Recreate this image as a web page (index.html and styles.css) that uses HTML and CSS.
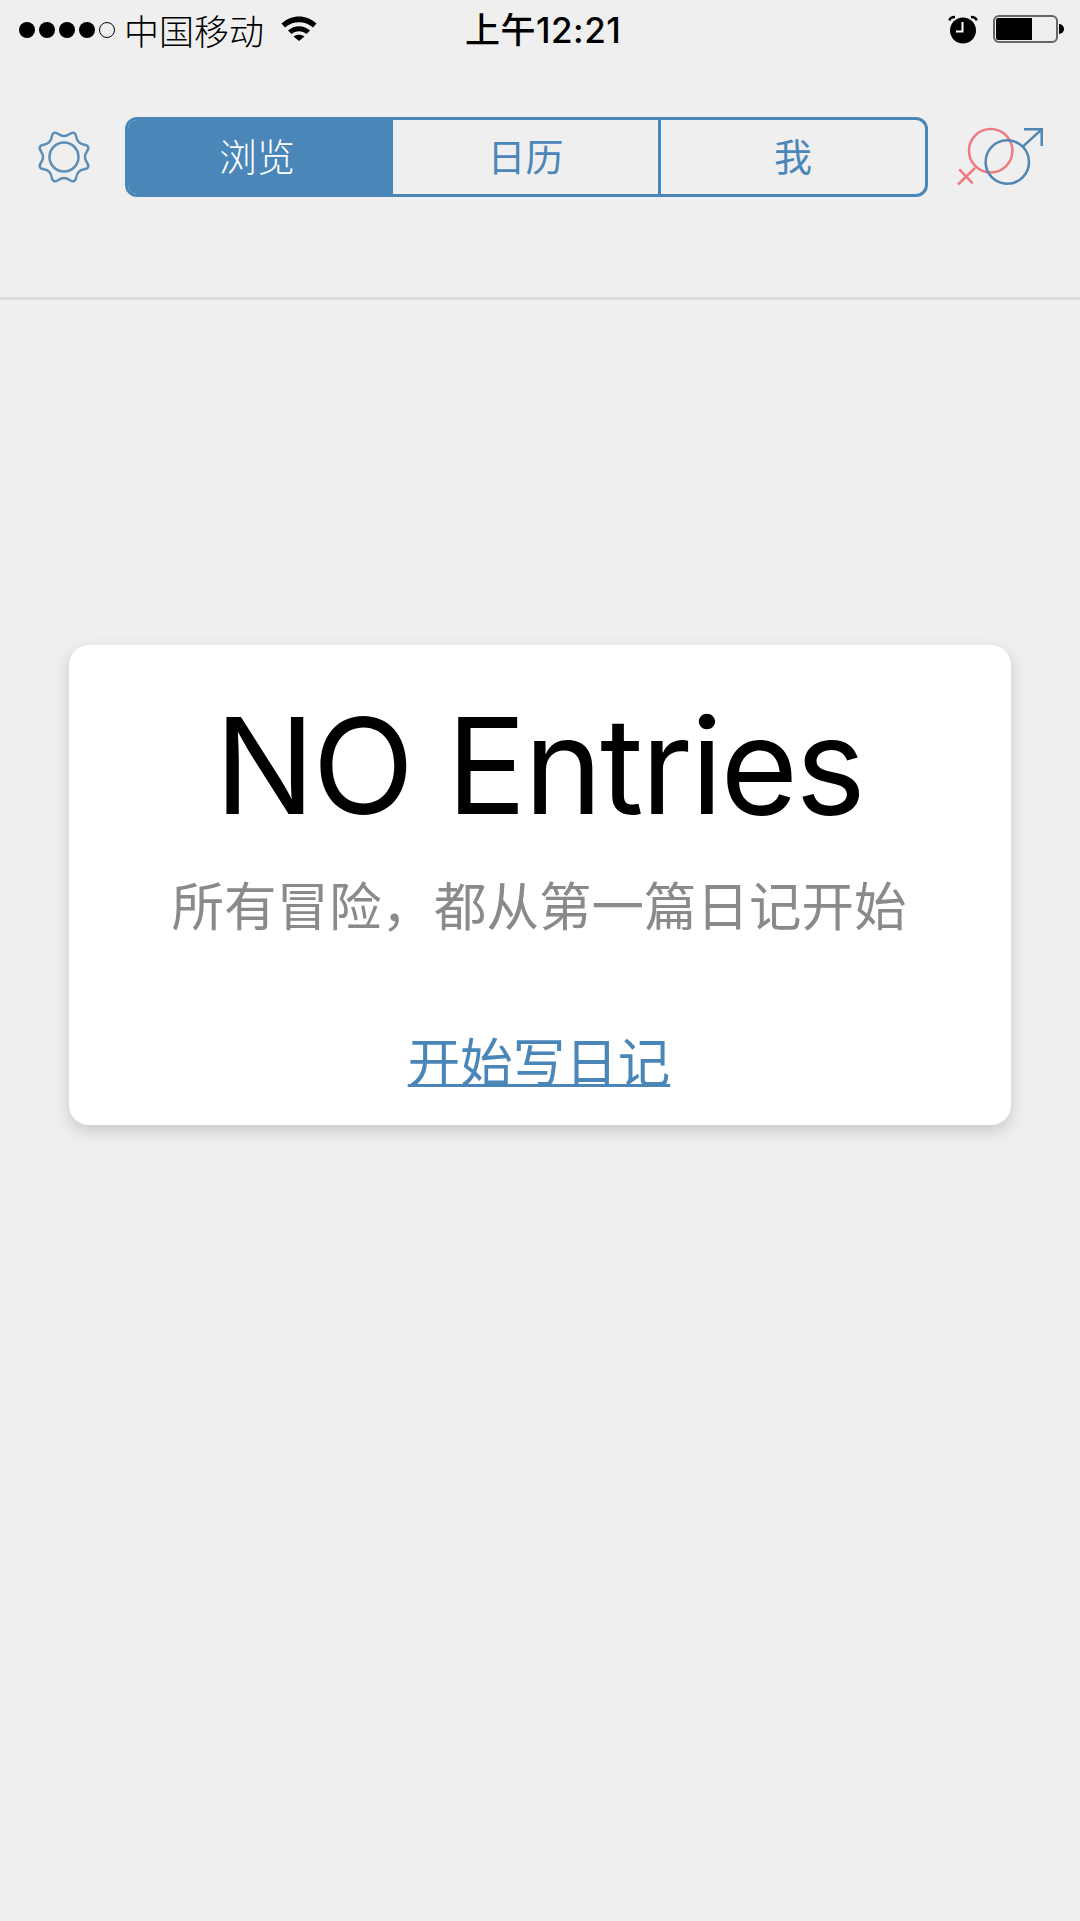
FILE: index.html

```html
<!DOCTYPE html>
<html>
<head>
    <meta charset="UTF-8">
    <title>日记</title>
    <link rel="stylesheet" href="styles.css">
</head>
<body>
    <div class="status">
        <div class="status-left">
            <div class="signal">
                <i class="dot"></i><i class="dot"></i><i class="dot"></i><i class="dot"></i><i class="dot empty"></i>
            </div>
            <span class="carrier">中国移动</span>
            <svg class="wifi" width="36" height="26" viewBox="0 0 36 26">
                <path d="M0.500 8.500C10.500 -1 25.500 -1 35.500 8.500L32 12.500C24 5.500 12 5.500 4 12.500Z"/>
                <path d="M7 15.500C13.500 9.800 22.500 9.800 29 15.500L25.500 19C20.800 15.200 15.200 15.200 10.500 19Z"/>
                <path d="M12.500 21.500C15.500 19.200 20.500 19.200 23.500 21.500L18 26Z"/>
            </svg>
        </div>
        <div class="clock">上午12:21</div>
        <div class="status-right">
            <svg class="alarm" width="30" height="30" viewBox="0 0 30 30">
                <circle cx="15" cy="15.500" r="13"/>
                <path d="M1.500 5.500Q2 2 7 2" class="alarm-ear"/>
                <path d="M28.500 5.500Q28 2 23 2" class="alarm-ear"/>
                <path d="M14.500 7V16.500H8" class="alarm-hand"/>
            </svg>
            <div class="battery"><div class="battery-level"></div></div>
            <div class="battery-tip"></div>
        </div>
    </div>

    <div class="header">
        <svg class="gear" width="56" height="56" viewBox="0 0 56 56">
            <path d="M50.900 22.450Q47 28 50.900 33.550Q54.800 39.100 48.115 40.265Q41.430 41.430 40.265 48.115Q39.100 54.800 33.550 50.900Q28 47 22.450 50.900Q16.900 54.800 15.735 48.115Q14.570 41.430 7.885 40.265Q1.200 39.100 5.100 33.550Q9 28 5.100 22.450Q1.200 16.900 7.885 15.735Q14.570 14.570 15.735 7.885Q16.900 1.200 22.450 5.100Q28 9 33.550 5.100Q39.100 1.200 40.265 7.885Q41.430 14.570 48.115 15.735Q54.800 16.900 50.900 22.450Z"/>
            <circle cx="28" cy="28" r="14.500"/>
        </svg>
        <div class="tabs">
            <div class="tab active">浏览</div>
            <div class="tab tab-split">日历</div>
            <div class="tab">我</div>
        </div>
        <svg class="gender" width="90" height="66" viewBox="0 0 90 66">
            <g class="female">
                <circle cx="33.700" cy="26.700" r="21.700"/>
                <path d="M18 44L1 60.500M2.300 45.300L15.700 59.300"/>
            </g>
            <g class="male">
                <circle cx="50.300" cy="38" r="21.700"/>
                <path d="M65.500 22.800L84.700 5.300M67 5.300H84.700V22"/>
            </g>
        </svg>
    </div>

    <div class="main">
        <div class="card">
            <h1 class="card-title">NO Entries</h1>
            <p class="card-text">所有冒险，都从第一篇日记开始</p>
            <a class="card-link" href="#">开始写日记</a>
        </div>
    </div>
</body>
</html>
```

FILE: styles.css

```css
*{
    box-sizing: border-box;
}
html, body{
    margin: 0;
    padding: 0;
}
body{
    width: 1080px;
    height: 1921px;
    overflow: hidden;
    background-color: #efefef;
    font-family: "Inter", "Noto Sans CJK SC", sans-serif;
}

/* 状态栏 */
.status{
    position: relative;
    display: flex;
    justify-content: space-between;
    align-items: center;
    height: 60px;
    padding: 0 16px 0 19px;
    color: #000;
}
.status-left, .status-right{
    display: flex;
    align-items: center;
}
.signal{
    display: flex;
    gap: 4px;
}
.dot{
    width: 16px;
    height: 16px;
    border-radius: 50%;
    background-color: #000;
}
.dot.empty{
    background-color: transparent;
    border: 1px solid #000;
}
.carrier{
    margin-top: -2px;
    margin-left: 9px;
    font-size: 35px;
    font-weight: 300;
}
.wifi{
    margin-left: 17px;
    margin-top: -4px;
}
.clock{
    position: absolute;
    left: 465px;
    top: 6px;
    font-size: 35px;
    font-weight: 500;
    letter-spacing: 0.500px;
    line-height: 48px;
}
.alarm{
    margin-top: -1px;
    margin-right: 1px;
}
.alarm-ear{
    fill: none;
    stroke: #000;
    stroke-width: 2.500;
}
.alarm-hand{
    fill: none;
    stroke: #fff;
    stroke-width: 2;
}
.battery{
    width: 65px;
    height: 28px;
    margin-top: -2px;
    margin-left: 14px;
    padding: 1px;
    border: 2px solid #666;
    border-radius: 6px;
}
.battery-level{
    width: 36px;
    height: 100%;
    background-color: #000;
    border-radius: 2px 0 0 2px;
}
.battery-tip{
    width: 5px;
    height: 10px;
    margin-top: -2px;
    margin-left: 1px;
    background-color: #000;
    border-radius: 0 5px 5px 0;
}

/* 顶部导航 */
.header{
    display: flex;
    align-items: center;
    height: 240px;
    padding: 0 0 43px 36px;
    border-bottom: 3px solid #dcdcdc;
}
.gear{
    fill: none;
    stroke: #5c8fb8;
    stroke-width: 2.500;
}
.tabs{
    display: grid;
    grid-template-columns: 265px 268px 264px;
    width: 803px;
    height: 80px;
    margin-left: 33px;
    border: 3px solid #4a86b8;
    border-radius: 12px;
    overflow: hidden;
}
.tab{
    text-align: center;
    font-size: 38px;
    line-height: 74px;
    color: #4a86b8;
}
.tab-split{
    border-right: 3px solid #4a86b8;
}
.tab.active{
    padding-right: 7px;
    color: #fff;
    font-weight: 300;
    background-color: #4a86b8;
}
.gender{
    margin-left: 29px;
    fill: none;
    stroke-width: 2.500;
}
.female{
    stroke: #ef7b80;
}
.male{
    stroke: #4f86b3;
}

/* 空状态卡片 */
.main{
    padding: 345px 69px 0;
}
.card{
    display: flex;
    flex-direction: column;
    align-items: center;
    height: 480px;
    padding-right: 2px;
    background-color: #fff;
    border-radius: 20px;
    box-shadow: 0 6px 16px rgba(0, 0, 0, 0.16);
}
.card-title{
    margin: 41px 0 0;
    font-size: 133px;
    font-weight: 400;
    letter-spacing: -2.500px;
    line-height: 160px;
    color: #000;
}
.card-text{
    margin: 23px 0 0;
    font-size: 52.500px;
    line-height: 76px;
    color: #8a8a8a;
}
.card-link{
    margin-top: 80px;
    font-size: 52.500px;
    line-height: 76px;
    color: #4a86b8;
    text-decoration: underline;
    text-decoration-thickness: 3px;
}
```
